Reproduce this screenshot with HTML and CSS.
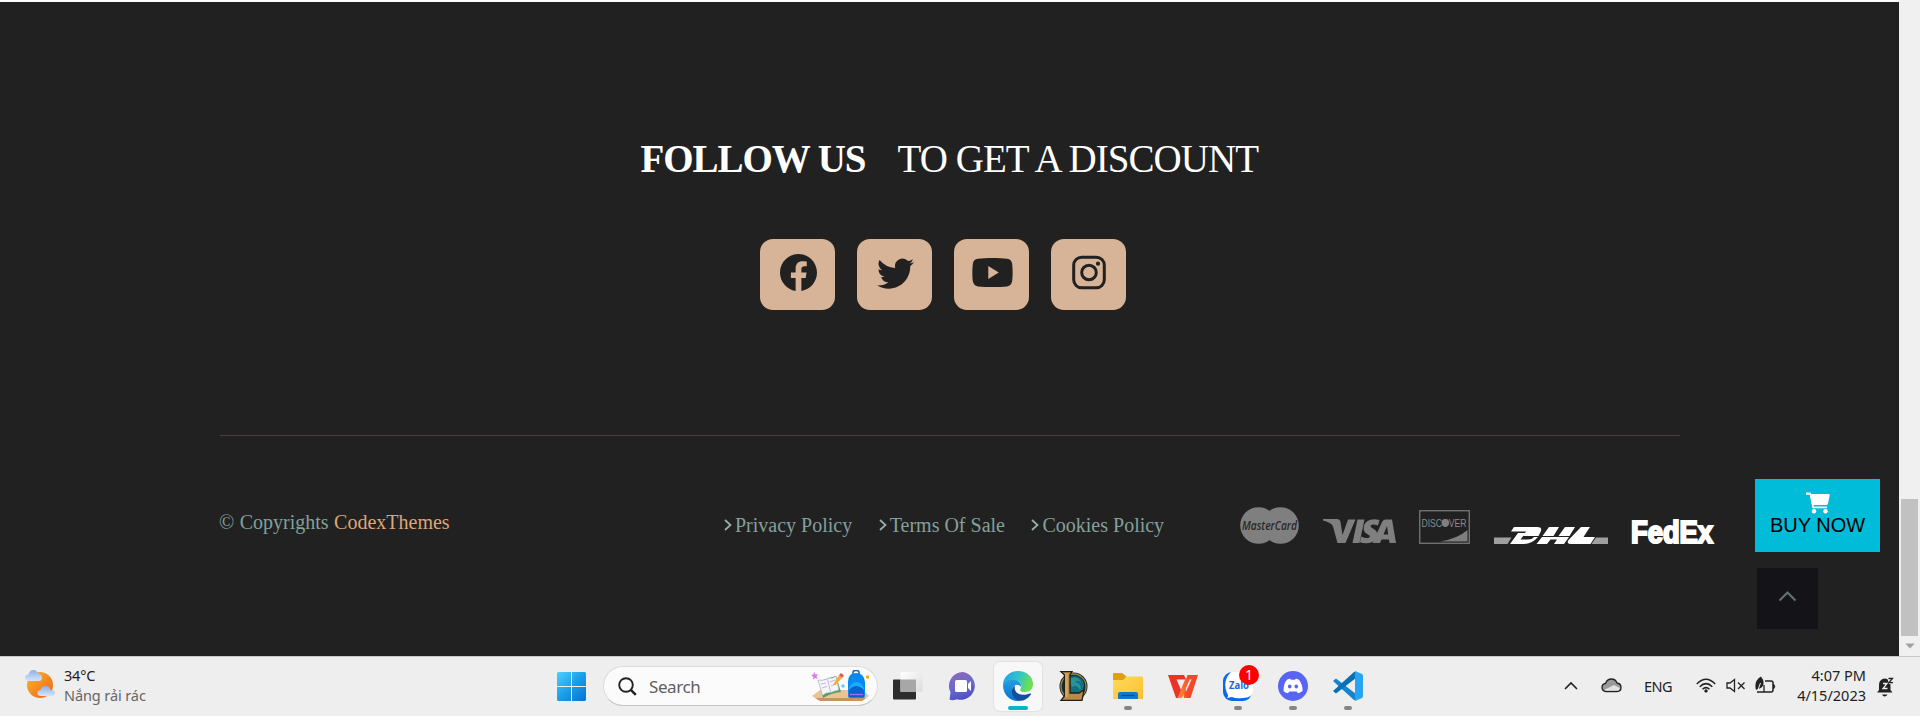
FILE: index.html
```html
<!DOCTYPE html>
<html lang="en">
<head>
<meta charset="utf-8">
<title>Follow us</title>
<link rel="stylesheet" href="styles.css">
</head>
<body>
<div class="window">
  <footer class="page">
    <h2 class="headline"><strong class="headline-bold">FOLLOW US</strong><span class="headline-light">TO GET A DISCOUNT</span></h2>
    <div class="socials">
      <a class="social"><svg width="37" height="37" viewBox="0 0 16 16"><path d="M16 8.049c0-4.446-3.582-8.05-8-8.05C3.58 0-.002 3.603-.002 8.05c0 4.017 2.926 7.347 6.75 7.951v-5.625h-2.03V8.05H6.75V6.275c0-2.017 1.195-3.131 3.022-3.131.876 0 1.791.157 1.791.157v1.98h-1.009c-.993 0-1.303.621-1.303 1.258v1.51h2.218l-.354 2.326H9.25V16c3.824-.604 6.75-3.934 6.75-7.951z"/></svg></a>
      <a class="social"><svg width="37" height="37" viewBox="0 0 16 16"><path d="M5.026 15c6.038 0 9.341-5.003 9.341-9.334 0-.14 0-.282-.006-.422A6.685 6.685 0 0 0 16 3.542a6.658 6.658 0 0 1-1.889.518 3.301 3.301 0 0 0 1.447-1.817 6.533 6.533 0 0 1-2.087.793A3.286 3.286 0 0 0 7.875 6.03a9.325 9.325 0 0 1-6.767-3.429 3.289 3.289 0 0 0 1.018 4.382A3.323 3.323 0 0 1 .64 6.575v.045a3.288 3.288 0 0 0 2.632 3.218 3.203 3.203 0 0 1-.865.115 3.23 3.23 0 0 1-.614-.057 3.283 3.283 0 0 0 3.067 2.277A6.588 6.588 0 0 1 .78 13.58a6.32 6.32 0 0 1-.78-.045A9.344 9.344 0 0 0 5.026 15z"/></svg></a>
      <a class="social"><svg width="41" height="37" viewBox="0 0 41 37"><path fill-rule="evenodd" d="M20.500 4c5 0 11 .2 14.500.7 3.300.5 4.600 2 5.100 4.900.6 4.400.9 12.500 0 17.700-.6 3.200-1.900 4.700-5.100 5.100-7.500.9-21.500.9-29 0-3.200-.4-4.500-1.900-5.100-5.100-.9-5.200-.6-13.300 0-17.700.5-2.900 1.800-4.400 5.100-4.900C9.500 4.200 15.500 4 20.500 4zM16.300 12v13l10.500-6.500z"/></svg></a>
      <a class="social"><svg class="insta" width="34" height="37" viewBox="0 0 34 37"><rect x="1.700" y="3.200" width="30.600" height="30.600" rx="8"/><circle cx="17" cy="18.500" r="7.300"/><circle class="insta-dot" cx="26" cy="9.700" r="2.100"/></svg></a>
    </div>
    <div class="rule"></div>
    <div class="bottom">
      <p class="copyright">© Copyrights <a class="brand">CodexThemes</a></p>
      <nav class="links">
        <a class="link"><svg width="8" height="12" viewBox="0 0 8 12"><path d="M1 1l5.500 5L1 11"/></svg>Privacy Policy</a>
        <a class="link"><svg width="8" height="12" viewBox="0 0 8 12"><path d="M1 1l5.500 5L1 11"/></svg>Terms Of Sale</a>
        <a class="link"><svg width="8" height="12" viewBox="0 0 8 12"><path d="M1 1l5.500 5L1 11"/></svg>Cookies Policy</a>
      </nav>
      <div class="payments">
        <svg width="59" height="37" viewBox="0 0 59 37"><circle cx="18.500" cy="18.500" r="18.300" fill="#7f7f7f"/><circle cx="40.500" cy="18.500" r="18.300" fill="#7f7f7f"/><text class="logo-mc" x="2" y="22.500" textLength="55" lengthAdjust="spacingAndGlyphs">MasterCard</text></svg>
        <svg class="visa" width="73" height="25" viewBox="0 0 73 25"><path d="M0 0H13.500Q17 0 17.500 3L19.500 16L25 .5H32.500L22.500 24H14.500L10 7.500Q9 4 0 1.500z"/><path d="M34.500.5H41.500L36.500 24H29.500z"/><path d="M56.500 1L55 6.500Q48 4.200 47.500 7Q47.500 8.500 51 10.200Q55 12.500 54 17Q52.500 24.300 43.500 24.300Q39 24.300 36.800 23L38.300 17.500Q42 19.500 45.300 19Q47.500 18.200 46.500 16.500Q41 13.500 40.800 11Q40 5 44.500 2Q49-.8 56.500 1z"/><path fill-rule="evenodd" d="M62.500.5H69L73 24H66.500L66 20.500H58.500L57 24H49.500L59 3Q60 .5 62.500.5zM64 7L60.500 15.500H65.200z"/></svg>
        <svg class="discover" width="51" height="34" viewBox="0 0 51 34"><rect x=".75" y=".75" width="49.500" height="32.500" fill="none" stroke="#7f7f7f" stroke-width="1.200"/><text class="logo-discover" x="2.500" y="16.600" textLength="45" lengthAdjust="spacingAndGlyphs">DISCOVER</text><circle cx="26.300" cy="12.800" r="3.800" fill="#7f7f7f"/><path d="M48.500 20v11.500H21Q38 29 48.500 20z" fill="#7f7f7f"/></svg>
        <svg class="dhl" width="114" height="17" viewBox="0 0 114 17"><path fill="#a0a0a0" d="M0 10.500H17.500L13.500 17H0zM102 10.500H114V17H97.500z"/><g fill="#fff"><path d="M20 0H43Q49 0 46.500 5L44.500 9H29L32 4.500H17z"/><path d="M24 6H31.500L26.500 12.500H34Q38 12.500 40 10H44Q38 17 30 17H16z"/><path d="M55 0H65L59.500 9H48.500zM71 0H81L75.500 9H64.500zM48 10H75L70 17H60L63 12.500H56.500L53 17H42.500z"/><path d="M87 0H96L89.500 10H101L96.500 17H77Q72 17 74.500 13z"/></g></svg>
        <svg class="fedex" width="84" height="25" viewBox="0 0 84 25"><text class="logo-fedex" x="0" y="23.500" textLength="82" lengthAdjust="spacingAndGlyphs">FedEx</text></svg>
      </div>
    </div>
    <a class="buy"><svg width="24" height="22" viewBox="0 0 24 22"><path d="M0 .5H4Q5 .5 5.200 2H22.800Q24 2 23.700 3.500L22 11.500Q21.600 13 20 13H7.500L7.800 14.500H21V16.300H6.500L3.700 2.700H0z"/><circle cx="8" cy="19.300" r="2.200"/><circle cx="19.500" cy="19.300" r="2.200"/></svg><span>BUY NOW</span></a>
    <a class="to-top"><svg width="19" height="12" viewBox="0 0 19 12"><path d="M1.500 10.500l8-8 8 8"/></svg></a>
  </footer>
  <div class="scrollbar"><div class="thumb"></div><svg width="10" height="6" viewBox="0 0 10 6"><path d="M.3 .5H9.700L5 5.500z" fill="#a0a0a0"/></svg></div>
</div>
<div class="taskbar">
  <div class="weather">
    <svg width="30" height="29" viewBox="0 0 30 29"><defs><linearGradient id="sun" x1="0" y1="0" x2="1" y2="1"><stop offset="0" stop-color="#f6b92c"/><stop offset="1" stop-color="#f2601b"/></linearGradient><linearGradient id="cl" x1="0" y1="0" x2="0" y2="1"><stop offset="0" stop-color="#8eaee9"/><stop offset="1" stop-color="#d5e7ff"/></linearGradient></defs><circle cx="15" cy="15" r="13" fill="url(#sun)"/><path d="M4 11Q0 11 0 7.800Q0 5 3.500 4.500Q4.500 0 8.500 0Q12 0 13 3.500Q17 4 17 7.500Q17 11 13.500 11z" fill="url(#cl)"/><path d="M16 26Q12.500 26 12.500 23Q12.500 20.300 15.500 20Q17 16 20.500 16Q24.500 16 25.500 20Q30 20 30 23Q30 26 26.500 26z" fill="url(#cl)"/></svg>
    <div class="weather-text"><span class="temp">34°C</span><span class="sky">Nắng rải rác</span></div>
  </div>
  <div class="center">
    <svg class="start" width="29" height="29" viewBox="0 0 29 29"><defs><linearGradient id="win" x1="0" y1="0" x2="1" y2="1"><stop offset="0" stop-color="#4fd0ff"/><stop offset=".5" stop-color="#1a9fe8"/><stop offset="1" stop-color="#0672cf"/></linearGradient></defs><path fill="url(#win)" d="M1 0H14V14H0V1zM15 0H28L29 1V14H15zM0 15H14V29H1L0 28zM15 15H29V28L28 29H15z"/></svg>
    <div class="search">
      <svg width="19" height="19" viewBox="0 0 19 19"><circle cx="8" cy="8" r="6.800" fill="none" stroke="#222" stroke-width="1.900"/><path d="M12.800 12.800l5 5" stroke="#222" stroke-width="2.500"/></svg>
      <span class="search-label">Search</span>
      <svg width="60" height="32" viewBox="0 0 60 32"><path d="M1 26L9 20H52L58 26L52 30.500H9z" fill="#e8c497"/><path d="M4 28L9 31H51L55 28z" fill="#c69462"/><path d="M9 11L25 6L30 22Q20 23 12 28z" fill="#4ca25b"/><path d="M7 10Q14 11 16.500 8Q22 9 25 6L28 20Q23 21 20 22.500Q15 22 11.500 25.500z" fill="#f5f4fb" stroke="#aaa9bd" stroke-width=".7"/><path d="M16.500 9L19.500 22M10 14l5-1M11 18l5-1.500M19 12l5-2M20 16l5-2" stroke="#9995b5" fill="none" stroke-width=".6"/><path d="M22 15L28 5L31 8L24.500 15z" fill="#f9a83b"/><path d="M28 5L30 3L33 5.500L31 8z" fill="#e9574a"/><path d="M3 2l1.500 2.500L7 4 5.500 6.500 7 9 4.300 8 2 9.500 2.300 6.700 0 5l2.500-.5z" fill="#dd76ef"/><path d="M42 4V2Q42 .5 45 .5T48 2V4" fill="none" stroke="#1266a2" stroke-width="1.500"/><path d="M37 12Q37 3 45 3T54 12V26Q54 28 52 28H39Q37 28 37 26z" fill="#078af0"/><path d="M38 18Q41 12 45.500 12T53 18V24H38z" fill="#18aefb"/><path d="M38 20Q45 12 53 20V27H38z" fill="#0864cc"/><path d="M39 24.500H52" stroke="#a370ee" stroke-width="1.200"/><circle cx="56.500" cy="7" r="1.700" fill="#fca90b"/><circle cx="32" cy="16" r="1.700" fill="#5fd0e9"/></svg>
    </div>
    <div class="apps">
      <div class="app"><svg width="30" height="30" viewBox="0 0 30 30"><defs><linearGradient id="tv" x1="0" y1="0" x2="1" y2="1"><stop offset="0" stop-color="#fff"/><stop offset="1" stop-color="#dcdcdc"/></linearGradient></defs><rect x="0" y="8.500" width="23" height="20" rx="1" fill="#2d2d2d"/><rect x="7.500" y="1" width="22" height="20" rx="1" fill="url(#tv)"/><path d="M7.500 8.500H23V21H7.500z" fill="#a7a7a7"/></svg></div>
      <div class="app"><svg width="30" height="30" viewBox="0 0 30 30"><defs><linearGradient id="ch" x1=".2" y1="0" x2=".5" y2="1"><stop offset="0" stop-color="#8c68b8"/><stop offset=".5" stop-color="#6c6bd0"/><stop offset="1" stop-color="#4e50c0"/></linearGradient></defs><path d="M15 1A14 14 0 1 1 9 28.300Q4 30 1.500 28.500L2.500 21.500A14 14 0 0 1 15 1z" fill="url(#ch)"/><rect x="7" y="9" width="12" height="12" rx="1.500" fill="#fff"/><path d="M20 13l3-3v10l-3-3z" fill="#fff"/></svg></div>
      <div class="app active"><svg width="30" height="30" viewBox="0 0 30 30"><defs><linearGradient id="eg" x1="0" y1="0" x2="1" y2=".3"><stop offset="0" stop-color="#1c9de0"/><stop offset=".55" stop-color="#31c4cb"/><stop offset="1" stop-color="#6be052"/></linearGradient><linearGradient id="eb" x1="0" y1="0" x2="0" y2="1"><stop offset="0" stop-color="#229ee2"/><stop offset="1" stop-color="#0a72cf"/></linearGradient></defs><path d="M0 14C0 6 7 0 15 0C24 0 30 6 30 13C30 18 27 21 22 21C18 21 16.500 19.500 17.500 18C20 14 17 10 12 10C7 10 2 11 0 14z" fill="url(#eg)"/><path d="M0 14C2 10 6 8.500 10 9C15 9 19 12 18 16C16 13 11 13 9.500 17C7.500 23 12 29 19 29.500C8 32 0 24 0 14z" fill="url(#eb)"/><path d="M12 14C10 22 17 26 27 22.500Q29 22 27.500 24C24 29 18 31 14 29C8 26 7 18 12 14z" fill="#10509f"/></svg><i class="run-active"></i></div>
      <div class="app"><svg width="30" height="30" viewBox="0 0 30 30"><circle cx="15.500" cy="15.500" r="14" fill="#1b252b"/><circle cx="15.500" cy="15.500" r="12.500" fill="#0b343e" stroke="#a98543" stroke-width="1.300"/><circle cx="16.500" cy="14.500" r="9.500" fill="#12717e"/><path d="M11 9Q18 3 24 12Q20 8 17 11Q25 13 22 20Q20 13 14 16z" fill="#2b9198"/><path d="M3 .7H14L12 4V22H21L26 19L24 29.300H3L6.500 25V4z" fill="#b98b45" stroke="#241e19" stroke-width="1.300"/><path d="M7 2H10V26H7z" fill="#d0a45e"/></svg></div>
      <div class="app"><svg width="30" height="30" viewBox="0 0 30 30"><defs><linearGradient id="fo" x1="0" y1="0" x2="1" y2="1"><stop offset="0" stop-color="#ffda5e"/><stop offset="1" stop-color="#fbc02e"/></linearGradient></defs><path d="M0 3Q0 2 1 2H9L13 5V12H0z" fill="#dfa00e"/><path d="M0 9H10L13.500 5.500H29Q30 5.500 30 6.500V28H0z" fill="url(#fo)"/><path d="M5 28V23Q5 21 7 21H23Q25 21 25 23V28z" fill="#1477ce"/><path d="M8.500 24.500H21.500" stroke="#0a4c91" stroke-width="1.300"/></svg><i class="run"></i></div>
      <div class="app"><svg width="30" height="30" viewBox="0 0 30 30"><defs><linearGradient id="wp" x1="0" y1="1" x2="1" y2="0"><stop offset="0" stop-color="#ff8a3c"/><stop offset="1" stop-color="#f4502c"/></linearGradient></defs><path d="M0 4H16L18 8.500H8.500L13.500 20L11 27H8z" fill="#ea3427"/><path d="M14 16L15.800 13L20.500 27H16z" fill="#fb5a2a"/><path d="M19.500 4H30L22.500 27H19L17.500 22L23.500 8.500H18z" fill="#f4482a"/><path d="M17.500 7.500H22L14 27H9.500z" fill="url(#wp)"/></svg></div>
      <div class="app"><svg width="30" height="30" viewBox="0 0 30 30"><rect x="0" y="1" width="29" height="29" rx="9" fill="#0b68ed"/><path d="M8 1H21Q30 2 30 12V19Q30 27 20 27Q13 28 9 26L4 27Q6 25 4 22Q-1 10 8 1z" fill="#fff"/><text class="zalo" x="6" y="18" textLength="20" lengthAdjust="spacingAndGlyphs">Zalo</text></svg><b class="badge">1</b><i class="run"></i></div>
      <div class="app"><svg width="30" height="30" viewBox="0 0 30 30"><circle cx="15" cy="15" r="15" fill="#5865f2"/><path d="M10.500 8Q12 7.300 12.500 8L13 8.800H17L17.500 8Q18 7.300 21 8.700Q25 14 24.500 20Q22 22 20 22.300L18.700 20.500H11.300L10 22.300Q7 22 5.500 20Q5.500 12 9 8.700z" fill="#fff"/><ellipse cx="11.700" cy="15.500" rx="1.800" ry="2" fill="#5865f2"/><ellipse cx="18.300" cy="15.500" rx="1.800" ry="2" fill="#5865f2"/></svg><i class="run"></i></div>
      <div class="app"><svg width="30" height="30" viewBox="0 0 30 30"><path d="M0 10L3 7.500L23 23V29.500L21 29z" fill="#1484cf"/><path d="M0 20L3 22.500L23 7V.5L21 1z" fill="#0870b7"/><path d="M22 0L29 3Q30 3.500 30 5V25Q30 26.500 29 27L22 30z" fill="#27a5f2"/></svg><i class="run"></i></div>
    </div>
  </div>
  <div class="tray">
    <svg class="t-up" width="14" height="9" viewBox="0 0 14 9"><path d="M1 8l6-6 6 6" fill="none" stroke="#222" stroke-width="1.600"/></svg>
    <svg class="t-cloud" width="21" height="15" viewBox="0 0 21 15"><path d="M5 13.500Q1 13 1 9.500Q1 6 4.500 5.500Q6 1 10.500 1Q14.500 1 16 5Q20 5.500 20 9.500Q20 13.500 16 13.500z" fill="#999" stroke="#222" stroke-width="1.300"/><path d="M3 12L13 7L19 10Q18 13 16 12.800H5z" fill="#e1e1e1"/></svg>
    <span class="t-lang">ENG</span>
    <svg class="t-wifi" width="20" height="15" viewBox="0 0 20 15"><g fill="none" stroke="#222" stroke-width="1.500"><path d="M.8 6Q10-3.500 19.200 6"/><path d="M3.700 8.700Q10 2.500 16.300 8.700"/><path d="M6.500 11.200Q10 8 13.500 11.200"/></g><circle cx="10" cy="12.900" r="1.700" fill="#222"/></svg>
    <svg class="t-vol" width="20" height="15" viewBox="0 0 20 15"><g fill="none" stroke="#222" stroke-width="1.300"><path d="M1 5H4L8.500 1.500V13.500L4 10H1z"/><path d="M12 4.500l6.500 6.500M18.500 4.500L12 11"/></g></svg>
    <svg class="t-bat" width="21" height="18" viewBox="0 0 21 18"><path d="M10 5H16Q18 5 18 7V14Q18 16 16 16H2" fill="none" stroke="#222" stroke-width="1.500"/><path d="M18.500 8Q21 10.500 18.500 13z" fill="#222" stroke="#222"/><path d="M1 14Q-1.500 5 6 .5Q9 4 8.500 8Q8 12 3 13z" fill="#222"/><path d="M2.500 15L5.500 7" stroke="#eee"/><path d="M9 9V16" stroke="#222" stroke-width="1.300"/></svg>
    <div class="clock"><span>4:07 PM</span><span>4/15/2023</span></div>
    <svg class="t-bell" width="17" height="20" viewBox="0 0 17 20"><path d="M0 15.500L2 13V8Q2 2 8 1.500Q13 2 13.500 8V13L15.500 15.500z" fill="#222"/><path d="M5 17.500H10.500Q9.500 19.500 7.700 19.500T5 17.500z" fill="#222"/><path d="M6 6.500H10L6 11.500H10.500" fill="none" stroke="#eee" stroke-width="1.300"/><path d="M10 0H17V7H12z" fill="#eee"/><path d="M11.500 1.500H15.500L12 5.700H16" fill="none" stroke="#222" stroke-width="1.300"/></svg>
  </div>
</div>
</body>
</html>
```

FILE: styles.css
```css
* { box-sizing: border-box; }
body { margin: 0; width: 1920px; height: 716px; overflow: hidden; display: flex; flex-direction: column; background: #212121; }
svg { display: block; flex: none; }
.window { display: flex; height: 656px; }
.page { position: relative; width: 1899px; background: #212121; border-top: 2px solid #fdfdfd; font-family: "Liberation Serif", "Times New Roman", serif; display: flex; flex-direction: column; }
.headline { margin: 132px 0 0; height: 50px; display: flex; justify-content: center; gap: 33px; font-size: 39px; line-height: 50px; color: #fff; font-weight: 400; white-space: nowrap; }
.headline-bold { font-weight: 700; width: 224px; letter-spacing: -1.05px; }
.headline-light { width: 361px; letter-spacing: -.95px; }
.socials { display: flex; gap: 22px; margin: 55px 0 0 760px; }
.social { width: 75px; height: 71px; border-radius: 13px; background: #d7b397; display: flex; justify-content: center; padding: 15px 0 0 1px; fill: #212121; }
.insta { fill: none; stroke: #212121; stroke-width: 3; }
.insta-dot { fill: #212121; stroke: none; }
.rule { margin: 125px 0 0 220px; width: 1460px; height: 1px; background: #48403e; }
.bottom { margin-left: 219px; width: 1497px; display: flex; align-items: flex-start; color: #84a09b; font-size: 20px; line-height: 24px; white-space: nowrap; }
.copyright { margin: 74px 0 0; width: 505px; word-spacing: .5px; }
.brand { color: #dfa574; }
.links { display: flex; gap: 26.500px; margin-top: 77px; width: 516px; }
.link { display: flex; align-items: center; gap: 3px; }
.link svg { fill: none; stroke: #9bb0ac; stroke-width: 1.7; }
.payments { display: flex; align-items: flex-end; margin-top: 71px; height: 37px; }
.visa { margin-left: 24px; fill: #7f7f7f; }
.discover { margin-left: 23px; }
.dhl { margin-left: 24px; }
.fedex { margin-left: 23px; }
.logo-mc { font: italic 600 12px "Open Sans", sans-serif; fill: #292929; }
.logo-discover { font: 400 11px "Liberation Sans", sans-serif; fill: #8a8a8a; }
.logo-fedex { font: 700 31px "Liberation Sans", sans-serif; fill: #fff; stroke: #fff; stroke-width: 2.2; }
.buy { position: absolute; left: 1755px; top: 477px; width: 125px; height: 73px; background: #00bcd8; display: flex; flex-direction: column; align-items: center; padding-top: 13px; color: #000; font: 20px/23px "Liberation Sans", Arial, sans-serif; }
.buy svg { fill: #fff; }
.to-top { position: absolute; left: 1757px; top: 566px; width: 61px; height: 61px; background: #131318; display: flex; justify-content: center; padding-top: 22px; }
.to-top path { fill: none; stroke: #646e71; stroke-width: 2.2; }
.scrollbar { width: 21px; background: #f0f0f0; display: flex; flex-direction: column; align-items: center; padding-top: 499px; }
.thumb { width: 17px; height: 137px; background: #c1c1c1; margin-bottom: 7px; }
.taskbar { height: 60px; background: #eee; border-top: 1px solid #c8c8c8; display: flex; align-items: flex-start; font-family: "Noto Sans", "Open Sans", sans-serif; font-size: 14.500px; color: #222; }
.weather { display: flex; width: 557px; padding: 13px 0 0 25px; gap: 9px; }
.weather-text { display: flex; flex-direction: column; line-height: 20px; margin-top: -5px; letter-spacing: -.2px; }
.sky { color: #666; letter-spacing: -.1px; }
.center { display: flex; width: 1007px; }
.start { margin-top: 15px; }
.search { margin: 9px 0 0 17px; width: 275px; height: 40px; border-radius: 20px; border: 1px solid #dcdcdc; border-bottom-color: #c5c5c5; background: #fbfbfb; display: flex; align-items: center; padding-left: 14px; }
.search-label { color: #606060; font-size: 17px; width: 163px; margin-left: 12px; letter-spacing: -.4px; }
.search-label + svg { margin-left: -1px; }
.apps { display: flex; gap: 7px; margin: 5px 0 0 6px; }
.app { position: relative; width: 48px; height: 49px; border-radius: 6px; padding: 9px; }
.active { background: #f8f8f8; box-shadow: 0 0 1px 1px #e2e2e2; }
.run, .run-active { position: absolute; bottom: 1px; height: 4px; border-radius: 2px; left: 20px; width: 8px; background: #858585; }
.run-active { left: 14px; width: 20px; background: #00b7c5; }
.badge { position: absolute; left: 25px; top: 3px; width: 20px; height: 20px; border-radius: 50%; background: #f00; color: #fff; text-align: center; font-weight: 400; line-height: 20px; font-size: 14px; }
.zalo { font: 700 10px "Open Sans", sans-serif; fill: #1669dc; }
.tray { display: flex; }
.t-up { margin-top: 24px; }
.t-cloud { margin: 21px 0 0 23px; }
.t-lang { margin: 19px 0 0 22px; width: 29px; line-height: 20px; font-size: 14.500px; letter-spacing: -.5px; }
.t-wifi { margin: 21px 0 0 23px; }
.t-vol { margin: 21px 0 0 10px; }
.t-bat { margin: 19px 0 0 9px; }
.clock { width: 90px; margin-top: 8px; line-height: 20px; display: flex; flex-direction: column; align-items: flex-end; letter-spacing: 0; }
.t-bell { margin: 20px 0 0 11px; }
```
